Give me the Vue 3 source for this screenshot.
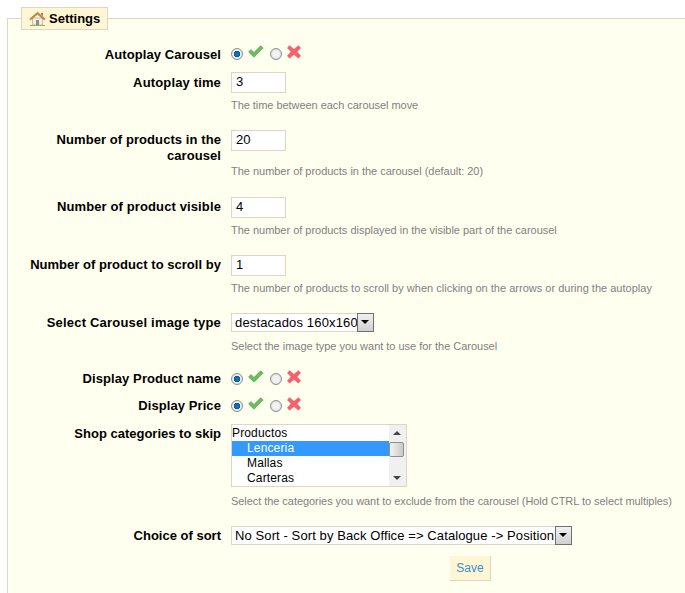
<script setup>
const help = {
  time: 'The time between each carousel move',
  count: 'The number of products in the carousel (default: 20)',
  visible: 'The number of products displayed in the visible part of the carousel',
  scroll: 'The number of products to scroll by when clicking on the arrows or during the autoplay',
  type: 'Select the image type you want to use for the Carousel',
  skip: 'Select the categories you want to exclude from the carousel (Hold CTRL to select multiples)'
}
</script>

<template>
  <div class="page">
    <fieldset class="box">
      <legend class="legend">
        <svg class="house" width="17" height="15" viewBox="0 0 17 15">
          <path d="M1 14h15v1H1z" fill="#7db660"/>
          <path d="M3.500 7h10v7h-10z" fill="#f4efe4" stroke="#b9a98c" stroke-width=".7"/>
          <path d="M7 9h3v5H7z" fill="#8b8d8f"/>
          <path d="M.7 8 8.500 1.200 16.300 8l-1.100.8L8.500 3.300 1.800 8.800z" fill="#c98a4b" stroke="#a7672e" stroke-width=".6"/>
          <path d="M12 2h2v3l-2-1.600z" fill="#b5733a"/>
        </svg>
        <span>Settings</span>
      </legend>

      <div class="row first">
        <label class="lab">Autoplay Carousel</label>
        <div class="radios">
          <span class="radio on"></span>
          <svg class="ok" width="16" height="13" viewBox="0 0 16 13"><path d="M.6 7 3 4.500l3 3L12.600.8 15.200 3 6 12.200z" fill="#6dbb62" stroke="#4f9a4a" stroke-width=".6"/></svg>
          <span class="radio"></span>
          <svg class="no" width="14" height="14" viewBox="0 0 14 14"><path d="M2.500.6 7 4.200 11.500.6 13.700 3 10 6.800l3.700 4-2.200 2.500L7 9.600l-4.500 3.700-2.200-2.500 3.700-4L.3 3z" fill="#f6616d" stroke="#ee5764" stroke-width=".4"/></svg>
        </div>
      </div>

      <div class="row r-time">
        <label class="lab">Autoplay time</label>
        <div class="ctl">
          <div class="input">3</div>
          <p class="help h-time">{{ help.time }}</p>
        </div>
      </div>

      <div class="row r-count">
        <label class="lab">Number of products in the carousel</label>
        <div class="ctl">
          <div class="input">20</div>
          <p class="help h-count">{{ help.count }}</p>
        </div>
      </div>

      <div class="row r-vis">
        <label class="lab">Number of product visible</label>
        <div class="ctl">
          <div class="input">4</div>
          <p class="help">{{ help.visible }}</p>
        </div>
      </div>

      <div class="row r-scroll">
        <label class="lab">Number of product to scroll by</label>
        <div class="ctl">
          <div class="input">1</div>
          <p class="help h-scroll">{{ help.scroll }}</p>
        </div>
      </div>

      <div class="row r-type">
        <label class="lab">Select Carousel image type</label>
        <div class="ctl">
          <div class="select s-type"><span class="val">destacados 160x160</span><span class="arrow"></span></div>
          <p class="help h-type">{{ help.type }}</p>
        </div>
      </div>

      <div class="row r-name">
        <label class="lab">Display Product name</label>
        <div class="radios">
          <span class="radio on"></span>
          <svg class="ok" width="16" height="13" viewBox="0 0 16 13"><path d="M.6 7 3 4.500l3 3L12.600.8 15.200 3 6 12.200z" fill="#6dbb62" stroke="#4f9a4a" stroke-width=".6"/></svg>
          <span class="radio"></span>
          <svg class="no" width="14" height="14" viewBox="0 0 14 14"><path d="M2.500.6 7 4.200 11.500.6 13.700 3 10 6.800l3.700 4-2.200 2.500L7 9.600l-4.500 3.700-2.200-2.500 3.700-4L.3 3z" fill="#f6616d" stroke="#ee5764" stroke-width=".4"/></svg>
        </div>
      </div>

      <div class="row r-price">
        <label class="lab">Display Price</label>
        <div class="radios">
          <span class="radio on"></span>
          <svg class="ok" width="16" height="13" viewBox="0 0 16 13"><path d="M.6 7 3 4.500l3 3L12.600.8 15.200 3 6 12.200z" fill="#6dbb62" stroke="#4f9a4a" stroke-width=".6"/></svg>
          <span class="radio"></span>
          <svg class="no" width="14" height="14" viewBox="0 0 14 14"><path d="M2.500.6 7 4.200 11.500.6 13.700 3 10 6.800l3.700 4-2.200 2.500L7 9.600l-4.500 3.700-2.200-2.500 3.700-4L.3 3z" fill="#f6616d" stroke="#ee5764" stroke-width=".4"/></svg>
        </div>
      </div>

      <div class="row r-skip">
        <label class="lab">Shop categories to skip</label>
        <div class="ctl">
          <div class="list">
            <ul class="opts">
              <li>Productos</li>
              <li class="sub sel">Lenceria</li>
              <li class="sub">Mallas</li>
              <li class="sub">Carteras</li>
            </ul>
            <div class="sb">
              <span class="up"></span>
              <span class="thumb"></span>
              <span class="down"></span>
            </div>
          </div>
          <p class="help h-skip">{{ help.skip }}</p>
        </div>
      </div>

      <div class="row r-sort">
        <label class="lab">Choice of sort</label>
        <div class="ctl">
          <div class="select s-sort"><span class="val">No Sort - Sort by Back Office =&gt; Catalogue -&gt; Position</span><span class="arrow"></span></div>
        </div>
      </div>

      <div class="actions">
        <button class="save" type="button">Save</button>
      </div>
    </fieldset>
  </div>
</template>

<style>
html, body { margin: 0; background: #fff; overflow: hidden; }
</style>

<style scoped>
.page {
  width: 685px;
  height: 593px;
  overflow: hidden;
  padding: 7px 0 0 7px;
  box-sizing: border-box;
  font-family: "Liberation Sans", Arial, sans-serif;
  font-size: 12px;
  color: #000;
}
.box {
  margin: 0;
  padding: 0 0 40px;
  width: 700px;
  box-sizing: border-box;
  border: 1px solid #dfd5c3;
  background: #ffffef;
  min-width: 0;
}
.legend {
  margin-left: 13px;
  padding: 0 7px;
  height: 21px;
  box-sizing: content-box;
  border: 1px solid #dfd5c3;
  background: #fff6d3;
  display: flex;
  align-items: center;
  gap: 3px;
  font-weight: bold;
  font-size: 13px;
  color: #000;
}
.house { display: block; margin-top: -1px; }
.row { display: flex; align-items: flex-start; }
.lab {
  width: 213px;
  flex: none;
  text-align: right;
  font-weight: bold;
  font-size: 13px;
  line-height: 16px;
  letter-spacing: .08px;
  color: #000;
}
.ctl { margin-left: 10px; }
.first { margin-top: 16px; }
.first .lab { padding-top: 1px; }
.radios { margin-left: 10px; display: flex; align-items: flex-start; height: 16px; }
.radio {
  width: 10px; height: 10px;
  margin-top: 2px;
  border-radius: 50%;
  border: 1px solid #8a8f96;
  background: radial-gradient(circle, #f2f2f2 0 40%, #cfcfcf 100%);
  flex: none;
}
.radio.on {
  background: radial-gradient(circle, #0f6fb0 0 30%, #15507e 42%, #e7ecf0 50%, #dfe3e6 100%);
}
.ok { margin: -1px 0 0 5px; }
.ok + .radio { margin-left: 6px; }
.no { margin: -1px 0 0 5px; }
.input {
  width: 48px;
  height: 15px;
  padding: 1px 1px 3px 4px;
  border: 1px solid #dfd5c3;
  background: #fff;
  font-size: 13px;
  line-height: 15px;
}
.help {
  margin: 6px 0 0;
  font-size: 11px;
  line-height: 13px;
  letter-spacing: -.02px;
  color: #7f7f7f;
  white-space: nowrap;
}
.h-time { letter-spacing: -.05px; }
.h-count { margin-top: 14px; }
.h-scroll { letter-spacing: .01px; }
.r-time { margin-top: 9px; }
.r-time .lab, .r-count .lab, .r-vis .lab, .r-scroll .lab { padding-top: 2px; }
.r-time .lab { padding-top: 3px; letter-spacing: .15px; }
.r-count { margin-top: 18px; }
.r-vis { margin-top: 19px; }
.r-vis .lab { letter-spacing: .12px; }
.r-scroll { margin-top: 18px; }
.r-scroll .lab { letter-spacing: .03px; }
.r-type { margin-top: 18px; }
.r-type .lab { padding-top: 2px; letter-spacing: .2px; }
.select {
  display: flex;
  align-items: center;
  height: 17px;
  background: #fff;
  border: 1px solid #dfd5c3;
  font-size: 13px;
  white-space: nowrap;
}
.s-type { width: 141px; }
.s-sort { width: 339px; }
.val { padding-left: 3px; flex: 1; overflow: hidden; }
.s-type .val { letter-spacing: .16px; }
.s-sort .val { letter-spacing: .1px; }
.arrow {
  width: 17px;
  height: 19px;
  margin: -1px -1px -1px 0;
  flex: none;
  border: 1px solid #6f6f6f;
  background: linear-gradient(#f1f1f1, #d0d0d0);
  position: relative;
  box-sizing: border-box;
}
.arrow::after {
  content: "";
  position: absolute;
  left: 3px; top: 6px;
  border: 4px solid transparent;
  border-top: 4px solid #000;
}
.h-type { margin-top: 8px; }
.r-name { margin-top: 18px; }
.r-name .lab { letter-spacing: .1px; }
.r-price { margin-top: 11px; }
.r-skip { margin-top: 10px; }
.r-skip .lab { padding-top: 2px; letter-spacing: 0; }
.list {
  display: flex;
  width: 174px;
  height: 61px;
  border: 1px solid #dfd5c3;
  background: #fff;
}
.opts {
  list-style: none;
  margin: 0;
  padding: 1px 0 0;
  flex: 1;
  font-size: 12px;
  letter-spacing: .15px;
  line-height: 15px;
}
.opts li { padding-left: 0; height: 15px; }
.opts .sub { padding-left: 15px; }
.opts .sel { background: #3399ff; color: #fff; }
.sb {
  width: 17px;
  background: #f0f0f0;
  position: relative;
}
.thumb {
  position: absolute;
  left: 0; top: 17px;
  width: 13px; height: 13px;
  border: 1px solid #8f8f8f;
  border-radius: 2px;
  background: linear-gradient(90deg, #f4f4f4, #c9c9c9);
}
.up, .down {
  position: absolute;
  left: 4px;
  border: 4px solid transparent;
}
.up { top: 2px; border-bottom: 4px solid #444; }
.down { bottom: 2px; border-top: 4px solid #444; }
.h-skip { margin-top: 8px; letter-spacing: -.055px; }
.r-sort { margin-top: 18px; }
.r-sort .lab { padding-top: 2px; letter-spacing: 0; }
.actions { padding-left: 442px; margin-top: 11px; }
.save {
  display: block;
  width: 41px;
  height: 25px;
  padding: 0;
  background: #fff6d3;
  border: 0;
  border-right: 1px solid #dfd5c3;
  border-bottom: 1px solid #dfd5c3;
  color: #3d8fd6;
  font-family: "Liberation Sans", Arial, sans-serif;
  font-size: 12px;
}
</style>
